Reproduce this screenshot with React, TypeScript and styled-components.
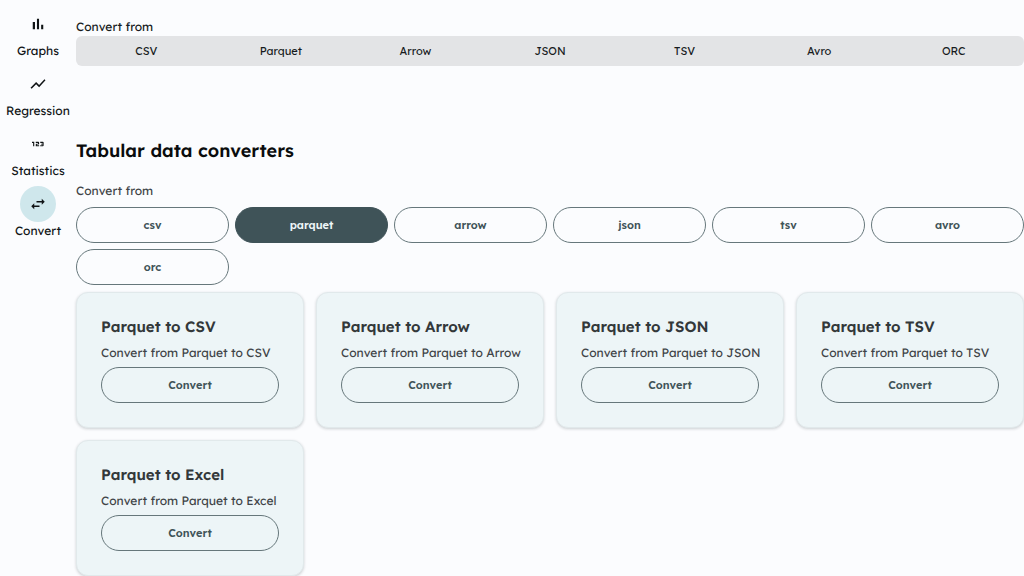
import React, { useState } from "react";
import styled, { createGlobalStyle } from "styled-components";
import { Md123, MdShowChart, MdSwapHoriz } from "react-icons/md";

const GlobalStyle = createGlobalStyle`
  * { box-sizing: border-box; }
  body {
    margin: 0;
    background: #fbfcfe;
    color: #101416;
    font-family: Lexend, Inter, "Noto Sans", sans-serif;
    font-size: 12px;
    line-height: 18px;
    text-rendering: geometricPrecision;
  }
`;

const Page = styled.div`
  display: flex;
  align-items: flex-start;
`;

const Sidebar = styled.nav`
  flex: 0 0 76px;
  display: flex;
  flex-direction: column;
  padding-top: 6px;
`;

const NavItem = styled.a`
  display: flex;
  flex-direction: column;
  align-items: center;
  height: 60px;
  color: inherit;
  text-decoration: none;
`;

const NavIcon = styled.span<{ $active: boolean }>`
  display: flex;
  align-items: center;
  justify-content: center;
  width: 36px;
  height: 36px;
  border-radius: 50%;
  font-size: 18px;
  background: ${(p) => (p.$active ? "#cfe7ec" : "transparent")};
`;

const Main = styled.main`
  flex: 1;
  min-width: 0;
  padding-top: 18px;
`;

const Label = styled.p<{ $muted?: boolean }>`
  margin: 0;
  color: ${(p) => (p.$muted ? "#3f4447" : "#171b1d")};
`;

const TabBar = styled.div`
  display: flex;
  height: 30px;
  padding: 3px;
  border-radius: 6px;
  background: #e3e4e6;
`;

const Tab = styled.button`
  flex: 1;
  padding: 0;
  border: 0;
  background: transparent;
  color: #171b1d;
  font: inherit;
  font-size: 11px;
`;

const Title = styled.h1`
  margin: 71px 0 17px;
  color: #0a0c0d;
  font-size: 18px;
  line-height: 28px;
  font-weight: 600;
`;

const FormatGrid = styled.div`
  display: grid;
  grid-template-columns: repeat(6, minmax(0, 1fr));
  gap: 6px;
  margin: 7px 0;
`;

const PillButton = styled.button<{ $selected?: boolean }>`
  width: 100%;
  height: 36px;
  padding: 0 12px;
  border: 1px solid ${(p) => (p.$selected ? "#3f5358" : "#66777b")};
  border-radius: 18px;
  background: ${(p) => (p.$selected ? "#3f5358" : "transparent")};
  color: ${(p) => (p.$selected ? "#eef6f8" : "#3f5358")};
  font: inherit;
  font-size: 11px;
  font-weight: 600;
`;

const CardGrid = styled.div`
  display: grid;
  grid-template-columns: repeat(4, minmax(0, 1fr));
  gap: 12px;
`;

const Card = styled.article`
  padding: 24px;
  border: 1px solid #e1e9eb;
  border-radius: 12px;
  background: #edf5f7;
  box-shadow: 0 1px 3px rgba(20, 35, 40, 0.2);
`;

const CardTitle = styled.h2`
  margin: 0 0 6px;
  color: #33383a;
  font-size: 15px;
  line-height: 20px;
  font-weight: 600;
`;

const CardText = styled.p`
  margin: 0 0 4px;
  color: #3f4447;
  line-height: 20px;
  white-space: nowrap;
`;

const BarsIcon = () => (
  <svg width="1em" height="1em" viewBox="0 0 24 24" fill="currentColor" aria-hidden="true">
    <path d="M5 9.2h3V19H5zM10.6 5h2.8v14h-2.8zm5.6 8H19v6h-2.8z" />
  </svg>
);

const navItems = [
  { label: "Graphs", Icon: BarsIcon },
  { label: "Regression", Icon: MdShowChart },
  { label: "Statistics", Icon: Md123 },
  { label: "Convert", Icon: MdSwapHoriz },
];

const formats = ["CSV", "Parquet", "Arrow", "JSON", "TSV", "Avro", "ORC"];
const targets = ["CSV", "Arrow", "JSON", "TSV", "Excel"];

export default function App() {
  const [source, setSource] = useState("Parquet");

  return (
    <>
      <GlobalStyle />
      <Page>
        <Sidebar>
          {navItems.map(({ label, Icon }) => (
            <NavItem key={label} href={`#${label.toLowerCase()}`}>
              <NavIcon $active={label === "Convert"}>
                <Icon />
              </NavIcon>
              {label}
            </NavItem>
          ))}
        </Sidebar>
        <Main>
          <Label id="tabs-label">Convert from</Label>
          <TabBar role="group" aria-labelledby="tabs-label">
            {formats.map((format) => (
              <Tab key={format} type="button" onClick={() => setSource(format)}>
                {format}
              </Tab>
            ))}
          </TabBar>
          <Title>Tabular data converters</Title>
          <Label id="formats-label" $muted>
            Convert from
          </Label>
          <FormatGrid role="group" aria-labelledby="formats-label">
            {formats.map((format) => (
              <PillButton
                key={format}
                type="button"
                $selected={format === source}
                aria-pressed={format === source}
                onClick={() => setSource(format)}
              >
                {format.toLowerCase()}
              </PillButton>
            ))}
          </FormatGrid>
          <CardGrid>
            {targets.map((target) => (
              <Card key={target}>
                <CardTitle>
                  {source} to {target}
                </CardTitle>
                <CardText>
                  Convert from {source} to {target}
                </CardText>
                <PillButton type="button">Convert</PillButton>
              </Card>
            ))}
          </CardGrid>
        </Main>
      </Page>
    </>
  );
}
